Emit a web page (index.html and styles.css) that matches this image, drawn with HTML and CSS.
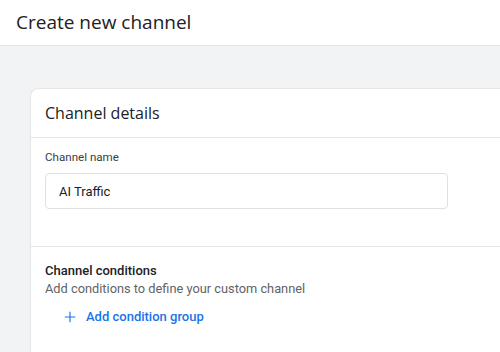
FILE: index.html
```html
<!DOCTYPE html>
<html>
<head>
<meta charset="utf-8">
<link rel="stylesheet" href="styles.css">
</head>
<body>
<header class="topbar">
  <h1 class="title">Create new channel</h1>
</header>
<main class="content">
  <section class="card">
    <div class="card-head">Channel details</div>
    <div class="card-body name-section">
      <label class="field-label">Channel name</label>
      <div class="input">AI Traffic</div>
    </div>
    <div class="card-body cond-section">
      <div class="cond-title">Channel conditions</div>
      <div class="cond-desc">Add conditions to define your custom channel</div>
      <button class="add-btn">
        <svg class="plus" viewBox="0 0 24 24" width="14" height="14"><path d="M12 3v18M3 12h18" stroke="#1a73e8" stroke-width="2" fill="none"/></svg>
        <span>Add condition group</span>
      </button>
    </div>
  </section>
</main>
</body>
</html>
```
FILE: styles.css
```css
* { box-sizing: border-box; }
html, body { margin: 0; padding: 0; height: 100%; }
body {
  font-family: Roboto, "Liberation Sans", sans-serif;
  color: #202124;
  background: #f1f3f4;
  overflow: hidden;
}
.topbar {
  height: 46px;
  background: #fff;
  border-bottom: 1px solid #e3e3e3;
  display: flex;
  align-items: center;
  padding-left: 16px;
}
.title {
  margin: 0;
  font-family: "Open Sans", Roboto, sans-serif;
  font-weight: 400;
  font-size: 19px;
  color: #202124;
  letter-spacing: 0;
  padding-bottom: 2px;
}
.content {
  padding: 42px 0 0 30px;
}
.card {
  background: #fff;
  border-radius: 8px 0 0 0;
  border: 1px solid #e6e6e6;
  border-right: none;
  border-bottom: none;
  min-height: 264px;
}
.card-head {
  height: 49px;
  display: flex;
  align-items: center;
  padding-left: 14px;
  font-family: "Open Sans", Roboto, sans-serif;
  font-size: 16px;
  color: #202124;
  border-bottom: 1px solid #e3e3e3;
}
.card-body { padding-left: 14px; }
.name-section {
  height: 109px;
  padding-top: 12px;
  border-bottom: 1px solid #e3e3e3;
}
.field-label {
  display: block;
  font-size: 11.6px;
  color: #3c4043;
  line-height: 14px;
  margin-bottom: 9px;
}
.input {
  width: 403px;
  height: 36px;
  border: 1px solid #e0e0e0;
  border-radius: 4px;
  display: flex;
  align-items: center;
  padding-left: 13px;
  font-size: 13px;
  color: #202124;
}
.cond-section { padding-top: 16px; }
.cond-title {
  font-size: 13px;
  font-weight: 500;
  line-height: 16px;
  color: #202124;
}
.cond-desc {
  font-size: 12.8px;
  color: #5f6368;
  line-height: 18px;
  margin-top: 1px;
}
.add-btn {
  margin-top: 11px;
  margin-left: 18px;
  border: none;
  background: none;
  padding: 0;
  display: flex;
  align-items: center;
  gap: 9px;
  font-family: Roboto, sans-serif;
  font-size: 13px;
  font-weight: 500;
  color: #1a73e8;
}
.plus { display: block; }
```
